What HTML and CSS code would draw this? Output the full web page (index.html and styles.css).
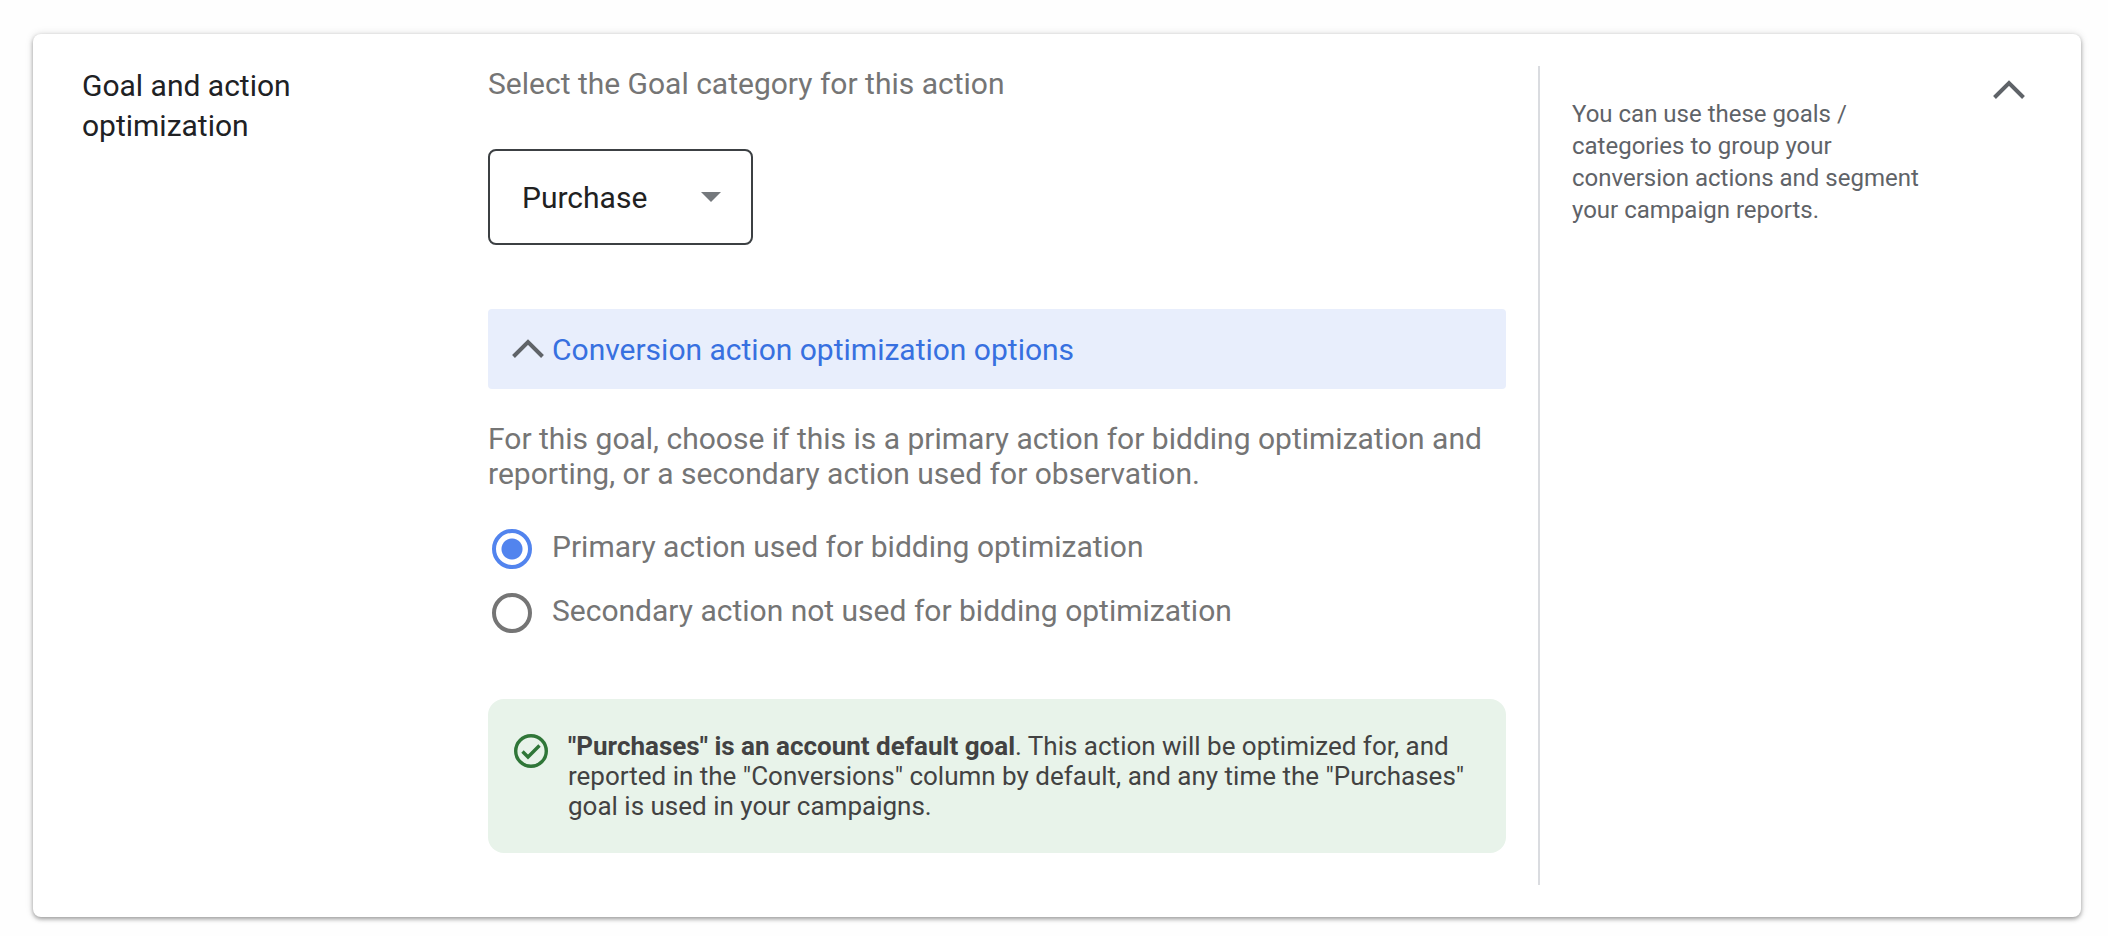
FILE: index.html
```html
<!DOCTYPE html>
<html lang="en">
  <head>
    <meta charset="UTF-8" />
    <title>Goal and action optimization</title>
    <link rel="stylesheet" href="styles.css">
  </head>
  <body>
    <section class="card">
      <h2>Goal and action<br />optimization</h2>

      <form class="settings">
        <label for="category">Select the Goal category for this action</label>
        <div class="select-box">
          <select id="category">
            <option value="purchase">Purchase</option>
          </select>
          <svg class="arrow" viewBox="0 0 20 10" aria-hidden="true">
            <path d="M0 0h20L10 10z" />
          </svg>
        </div>

        <button type="button" class="options-toggle" aria-expanded="true">
          <svg class="chevron" viewBox="0 0 32 20" aria-hidden="true">
            <path d="M1.500 17.500L16 3L30.500 17.500" />
          </svg>
          Conversion action optimization options
        </button>

        <p class="help">
          For this goal, choose if this is a primary action for bidding
          optimization and reporting, or a secondary action used for
          observation.
        </p>

        <div class="radio-list">
          <div class="radio-row">
            <input type="radio" id="primary" name="optimization" value="primary" checked />
            <label for="primary">Primary action used for bidding optimization</label>
          </div>
          <div class="radio-row">
            <input type="radio" id="secondary" name="optimization" value="secondary" />
            <label for="secondary">Secondary action not used for bidding optimization</label>
          </div>
        </div>

        <div class="notice">
          <svg class="check" viewBox="0 0 34 34" aria-hidden="true">
            <circle cx="17" cy="17" r="15.300" />
            <path d="M8.500 17.500L14 23L25.500 11.500" />
          </svg>
          <p>
            <strong>"Purchases" is an account default goal</strong>. This action
            will be optimized for, and reported in the "Conversions" column by
            default, and any time the "Purchases" goal is used in your
            campaigns.
          </p>
        </div>
      </form>

      <aside class="side">
        <p>
          You can use these goals / categories to group your conversion actions
          and segment your campaign reports.
        </p>
        <button type="button" class="collapse" aria-label="Collapse">
          <svg class="chevron" viewBox="0 0 32 20" aria-hidden="true">
            <path d="M1.500 17.500L16 3L30.500 17.500" />
          </svg>
        </button>
      </aside>
    </section>
  </body>
</html>
```

FILE: styles.css
```css
* {
  box-sizing: border-box;
}

body {
  margin: 0;
  padding: 34px 27px 19px 33px;
  font-family: Roboto, Arial, sans-serif;
  font-size: 30px;
  line-height: 35px;
  color: #757575;
  background-color: #fefefe;
}

.card {
  display: grid;
  grid-template-columns: 374px minmax(0, 1fr) 543px;
  column-gap: 32px;
  padding: 32px 0 32px 49px;
  background: white;
  border-radius: 8px;
  box-shadow: 0 2px 4px rgba(0, 0, 0, 0.35), 0 0 8px rgba(0, 0, 0, 0.12);
}

h2,
p {
  margin: 0;
}

h2 {
  font-size: 30px;
  font-weight: normal;
  line-height: 40px;
  color: #202124;
}

.settings {
  display: flex;
  flex-direction: column;
  padding-bottom: 32px;
}

.select-box {
  display: grid;
  align-self: flex-start;
  align-items: center;
  width: 265px;
  margin: 48px 0 64px;
}

.select-box select,
.arrow {
  grid-area: 1 / 1;
}

select {
  appearance: none;
  width: 100%;
  height: 96px;
  padding: 0 32px;
  border: 2px solid #3c4043;
  border-radius: 8px;
  background: white;
  font: inherit;
  color: #212121;
}

.arrow {
  justify-self: end;
  width: 20px;
  margin-right: 32px;
  fill: #75797d;
  pointer-events: none;
}

.chevron {
  width: 32px;
  height: 20px;
  fill: none;
  stroke: #5f6368;
  stroke-width: 4;
}

.options-toggle {
  display: flex;
  align-items: center;
  gap: 8px;
  height: 80px;
  padding: 0 24px;
  border: none;
  border-radius: 4px;
  background-color: #e8eefc;
  font: inherit;
  color: #3770e0;
  cursor: pointer;
}

.help {
  margin-top: 32px;
}

.radio-list {
  display: grid;
  gap: 24px;
  margin: 38px 0 66px;
}

.radio-row {
  display: flex;
  gap: 20px;
  padding-left: 4px;
}

input[type="radio"] {
  appearance: none;
  flex: none;
  width: 40px;
  height: 40px;
  margin: 0;
  border: 4px solid #757575;
  border-radius: 50%;
}

input[type="radio"]:checked {
  border-color: #5284ee;
  background: radial-gradient(circle, #5284ee 10px, transparent 11px);
}

.notice {
  display: flex;
  gap: 20px;
  padding: 32px 24px 32px 26px;
  border-radius: 16px;
  background-color: #e8f3ea;
  font-size: 26px;
  line-height: 30px;
  color: #424242;
}

.check {
  flex: none;
  width: 34px;
  height: 34px;
  margin-top: 3px;
  fill: none;
  stroke: #2f7638;
  stroke-width: 3.4;
}

.side {
  display: flex;
  align-items: flex-start;
  justify-content: space-between;
  padding: 0 56px 0 32px;
  border-left: 2px solid #dadce0;
}

.side p {
  width: 368px;
  padding-top: 32px;
  font-size: 24px;
  line-height: 32px;
  color: #5f6368;
}

.collapse {
  display: flex;
  padding: 14px 0;
  border: none;
  background: none;
  cursor: pointer;
}
```
